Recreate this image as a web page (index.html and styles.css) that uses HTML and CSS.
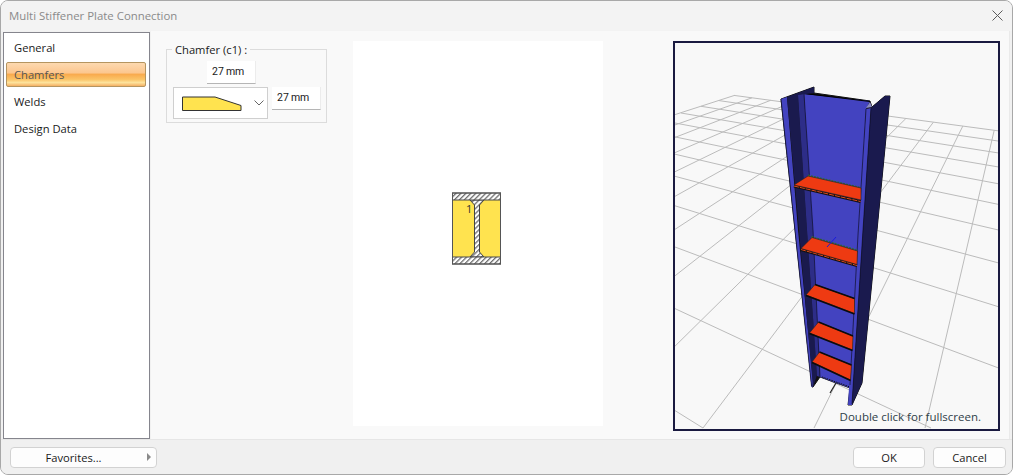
FILE: index.html
```html
<!DOCTYPE html>
<html lang="en">
<head>
<meta charset="utf-8">
<title>Multi Stiffener Plate Connection</title>
<link rel="stylesheet" href="styles.css">
</head>
<body>
<div class="window">
  <header class="titlebar">
    <span class="title">Multi Stiffener Plate Connection</span>
    <svg class="close" width="11" height="11" viewBox="0 0 11 11"><path d="M.5.5l10 10M10.5.5l-10 10" class="close-x"/></svg>
  </header>
  <div class="content">
    <nav class="sidebar">
      <div class="nav-item">General</div>
      <div class="nav-item selected">Chamfers</div>
      <div class="nav-item">Welds</div>
      <div class="nav-item">Design Data</div>
    </nav>
    <main class="main">
      <section class="group">
        <span class="legend">Chamfer (c1) :</span>
        <div class="top-row"><div class="field">27 mm</div></div>
        <div class="combo-row">
          <div class="combo">
            <svg width="60" height="15" viewBox="0 0 60 15"><path d="M.5 1H33L59 9.5V14.500H.5z" class="chamfer-shape"/></svg>
            <svg class="chev" width="10" height="6" viewBox="0 0 10 6"><path d="M.5.5L5 5 9.500.5" class="chev-line"/></svg>
          </div>
          <div class="field">27 mm</div>
        </div>
      </section>
      <section class="drawing">
        <svg width="50" height="73" viewBox="452 192 50 73">
          <defs>
            <pattern id="hatch" width="3.500" height="3.500" patternUnits="userSpaceOnUse" patternTransform="rotate(45)">
              <rect width="3.500" height="3.500" fill="#fff"/>
              <rect width="1.300" height="3.500" fill="#6e6e6e"/>
            </pattern>
          </defs>
          <rect x="453" y="200" width="47.500" height="57" class="sec-yellow"/>
          <path d="M470 200L474.500 205V252L470 257H484L479.500 252V205L484 200z" class="sec-web"/>
          <rect x="452.500" y="193" width="48" height="7" class="sec-flange"/>
          <rect x="452.500" y="257" width="48" height="7" class="sec-flange"/>
          <rect x="452.500" y="193" width="48" height="71" class="sec-frame"/>
          <text x="466" y="213" class="sec-label">1</text>
        </svg>
      </section>
      <section class="viewer">
        <svg class="scene" width="323" height="386" viewBox="675 43 323 386">
          <g class="grid">
            <path d="M734.500 95.400L-296 428M752 97.800L-185 428M770.700 100.300L-74 428M790.200 102.900L37 428M810.800 105.700L148 428M832.500 108.600L259 428M855.600 111.700L370 428M880 115L481 428M905.900 118.500L592 428M933.400 122.200L703 428M962.800 126.100L814 428M994.200 130.300L925 428"/>
            <path d="M675 410.600L703 428M675 308.600L931 428M675 247L1159 428M675 205.800L998 306.600M675 176.300L998 262.800M675 154.200L998 229.900M675 136.900L998 204.300M675 123L998 183.700M681 113L998 166.900M701 106.300L998 152.900M719 100.600L998 141M734 95.400L998 130.800"/>
          </g>
          <path d="M836 383L830 393" class="axis-black"/>
          <path d="M781 99L814 87 814 93 870 101 872 107 885 96 890 96 877 230 862 383 852 405 848 405 850 388 820 377 813 387 812 387z" class="col-outline"/>
          <path d="M804 94L870 101 866 109 850 388 820 377z" class="web"/>
          <path d="M804 93.500L870 101.500" class="edge"/>
          <path d="M866 108L870 102 872 107z" class="detail"/>
          <path d="M822 377L850 387" class="dashed"/>
          <path d="M781 99L787 97 798 230 813 381 812.500 387 811.500 387z" class="web"/>
          <path d="M787 97L814 87 814 93 798 95 807 230 817 375 813 387z" class="navy"/>
          <path d="M798 95L804 94 813 230 820 377 817 376 807 230z" class="fillet"/>
          <path d="M804 94L813 230 820 377" class="edge-thin"/>
          <path d="M866 109L871 108 863 230 852 405 848 405 858 230z" class="web"/>
          <path d="M871 108L885 96 890 96 877 230 862 383 852 405z" class="navy"/>
          <path d="M866 109L858 235 850 385" class="edge-thin"/>
          <path d="M871 108L863 230 852 404" class="edge-thin"/>
          <path d="M781 99L811.500 386" class="edge-thin"/>
          <path d="M808 175.500L861 188" class="hatch-edge"/>
          <path d="M811.500 237L857.500 250.500" class="hatch-edge"/>
          <path d="M794 186L860.500 201.500" class="plate-base"/>
          <path d="M794 186L860.500 201.500" class="plate-under"/>
          <path d="M808 176L861 188 861 200 794 185z" class="plate"/>
          <path d="M801 249.500L857 265.500" class="plate-base"/>
          <path d="M801 249.500L857 265.500" class="plate-under"/>
          <path d="M812 237.500L857.500 251 857 264.500 801 248.500z" class="plate"/>
          <path d="M815 284.500L854.500 298.500 854.500 313.500 806 295z" class="plate"/>
          <path d="M806 295.500L854.500 314M815 284.500L854.500 298.500" class="plate-edge"/>
          <path d="M818.500 322L853 336 852.500 350 809.500 333z" class="plate"/>
          <path d="M809.500 333.500L852.500 350.500M818.500 322L853 336" class="plate-edge"/>
          <path d="M819.500 352L851.500 365 850.500 380 812 362z" class="plate"/>
          <path d="M812 362.500L850.500 380.500M819.500 352L851.500 365" class="plate-edge"/>
          <path d="M827 247L836 237" class="axis-blue"/>
        </svg>
        <span class="hint">Double click for fullscreen.</span>
      </section>
    </main>
  </div>
  <footer class="footer">
    <button class="btn btn-fav" type="button">Favorites...<span class="tri"></span></button>
    <div class="actions">
      <button class="btn btn-ok" type="button">OK</button>
      <button class="btn btn-cancel" type="button">Cancel</button>
    </div>
  </footer>
</div>
</body>
</html>
```
FILE: styles.css
```css
* { box-sizing: border-box; }
html, body { margin: 0; padding: 0; }
body {
  width: 1013px;
  height: 475px;
  overflow: hidden;
  background: #fff;
  font-family: "Open Sans", "Noto Sans", sans-serif;
  font-size: 11.2px;
  color: #1a1a1a;
}
.window {
  width: 1013px;
  height: 475px;
  display: flex;
  flex-direction: column;
  background: #f1f1f1;
  border: 1px solid #a8a8a8;
  border-radius: 8px;
  overflow: hidden;
}
.titlebar {
  height: 30px;
  flex: none;
  display: flex;
  align-items: center;
  justify-content: space-between;
  padding: 0 9px 1px 8px;
  background: #f3f3f3;
}
.title { color: #8a8a8a; font-size: 11.4px; }
.close-x { stroke: #5c5c5c; stroke-width: 1; fill: none; }
.content {
  flex: 1;
  display: flex;
  min-height: 0;
  padding: 0 2px 0 2px;
}
.sidebar {
  width: 147px;
  flex: none;
  margin-top: 1px;
  padding: 1px 3px 0 2px;
  background: #fff;
  border: 1px solid #85858d;
}
.nav-item {
  height: 27px;
  line-height: 25px;
  padding-left: 7px;
  border: 1px solid transparent;
}
.nav-item.selected {
  height: 25px;
  margin: 1px 0;
  line-height: 23px;
  color: #555;
  border: 1px solid #b59560;
  border-radius: 2px;
  background: linear-gradient(#fdd9b0 0%, #fcc78f 42%, #f9ab4e 50%, #fbc468 72%, #fde39d 85%, #f5b064 100%);
}
.main {
  flex: 1;
  margin-left: 1px;
  display: flex;
  align-items: flex-start;
  padding: 10px 0 0 15px;
  background: #f9f9f9;
  border-right: 1px solid #eaeaea;
}
.group {
  position: relative;
  width: 161px;
  height: 74px;
  margin-top: 8px;
  padding: 11px 5px 0 6px;
  border: 1px solid #dcdcdc;
  flex: none;
}
.legend {
  position: absolute;
  left: 5px;
  top: -8px;
  padding: 0 3px;
  background: #f9f9f9;
  line-height: 16px;
  font-size: 11.2px;
}
.top-row { display: flex; padding-left: 34px; }
.combo-row { display: flex; gap: 4px; margin-top: 3px; align-items: flex-start; }
.field {
  width: 49px;
  height: 23px;
  padding-left: 5px;
  line-height: 21px;
  background: #fff;
  border-bottom: 1px solid #b5b5b5;
  border-right: 1px solid #ececec;
  font-family: "Roboto", sans-serif;
  font-size: 10.5px;
  word-spacing: -.5px;
}
.combo {
  width: 95px;
  height: 32px;
  flex: none;
  display: flex;
  align-items: center;
  justify-content: space-between;
  padding: 0 3px 0 8px;
  background: #fff;
  border: 1px solid #cfcfcf;
}
.chamfer-shape { fill: #ffe34f; stroke: #333; stroke-width: 1; }
.chev-line { fill: none; stroke: #666; stroke-width: 1; }
.drawing {
  width: 250px;
  height: 385px;
  flex: none;
  margin-left: 26px;
  padding: 0 3px 10px 0;
  display: flex;
  align-items: center;
  justify-content: center;
  background: #fff;
}
.sec-yellow { fill: #ffe34f; }
.sec-web { fill: url(#hatch); stroke: #444; stroke-width: 1; }
.sec-flange { fill: url(#hatch); stroke: #4a4a4a; stroke-width: 1; }
.sec-frame { fill: none; stroke: #555; stroke-width: 1; }
.sec-label { font-family: "Open Sans", sans-serif; font-size: 11px; fill: #333; }
.viewer {
  position: relative;
  width: 327px;
  height: 390px;
  flex: none;
  margin-left: 70px;
  background: #f8f8f8;
  border: 2px solid #1a1a40;
  overflow: hidden;
}
.scene { display: block; }
.grid path { fill: none; stroke: #bbb; stroke-width: 1; }
.col-outline { fill: #111; stroke: #111; stroke-width: 1; }
.web { fill: #4343c0; }
.navy { fill: #1a1a4e; }
.fillet { fill: #2d2d88; }
.edge { fill: none; stroke: #000; stroke-width: 1.2; }
.edge-thin { fill: none; stroke: #10102a; stroke-width: .7; }
.detail { fill: #8d8dc4; }
.dashed { fill: none; stroke: #111; stroke-width: 1; stroke-dasharray: 1.500 1; }
.plate { fill: #ee3a12; stroke: #222; stroke-width: .6; }
.plate-base { fill: none; stroke: #111; stroke-width: 3; }
.plate-under { fill: none; stroke: #e2491c; stroke-width: 1; stroke-dasharray: 5 1; }
.plate-edge { fill: none; stroke: #0c0c0c; stroke-width: 1.500; }
.hatch-edge { fill: none; stroke: #2e6b38; stroke-width: 2; stroke-dasharray: 2 1; }
.axis-blue { fill: none; stroke: #1a1ae0; stroke-width: 1; }
.axis-black { fill: none; stroke: #222; stroke-width: 1.2; }
.hint {
  position: absolute;
  right: 17px;
  bottom: 5px;
  color: #2f4048;
  font-size: 11.5px;
  white-space: nowrap;
}
.footer {
  height: 35px;
  flex: none;
  display: flex;
  justify-content: space-between;
  align-items: flex-start;
  padding: 7px 6px 0 9px;
  background: #f0f0f0;
  border-top: 1px solid #e6e6e6;
}
.actions { display: flex; gap: 8px; }
.btn {
  height: 21px;
  padding: 0;
  font: inherit;
  color: #1a1a1a;
  background: #fdfdfd;
  border: 1px solid #d2d2d2;
  border-radius: 4px;
}
.btn-fav { position: relative; width: 147px; padding-right: 20px; }
.tri {
  position: absolute;
  right: 5px;
  top: 5px;
  width: 0;
  height: 0;
  border-left: 4px solid #8a8a8a;
  border-top: 4px solid transparent;
  border-bottom: 4px solid transparent;
}
.btn-ok { width: 72px; }
.btn-cancel { width: 73px; }
```
